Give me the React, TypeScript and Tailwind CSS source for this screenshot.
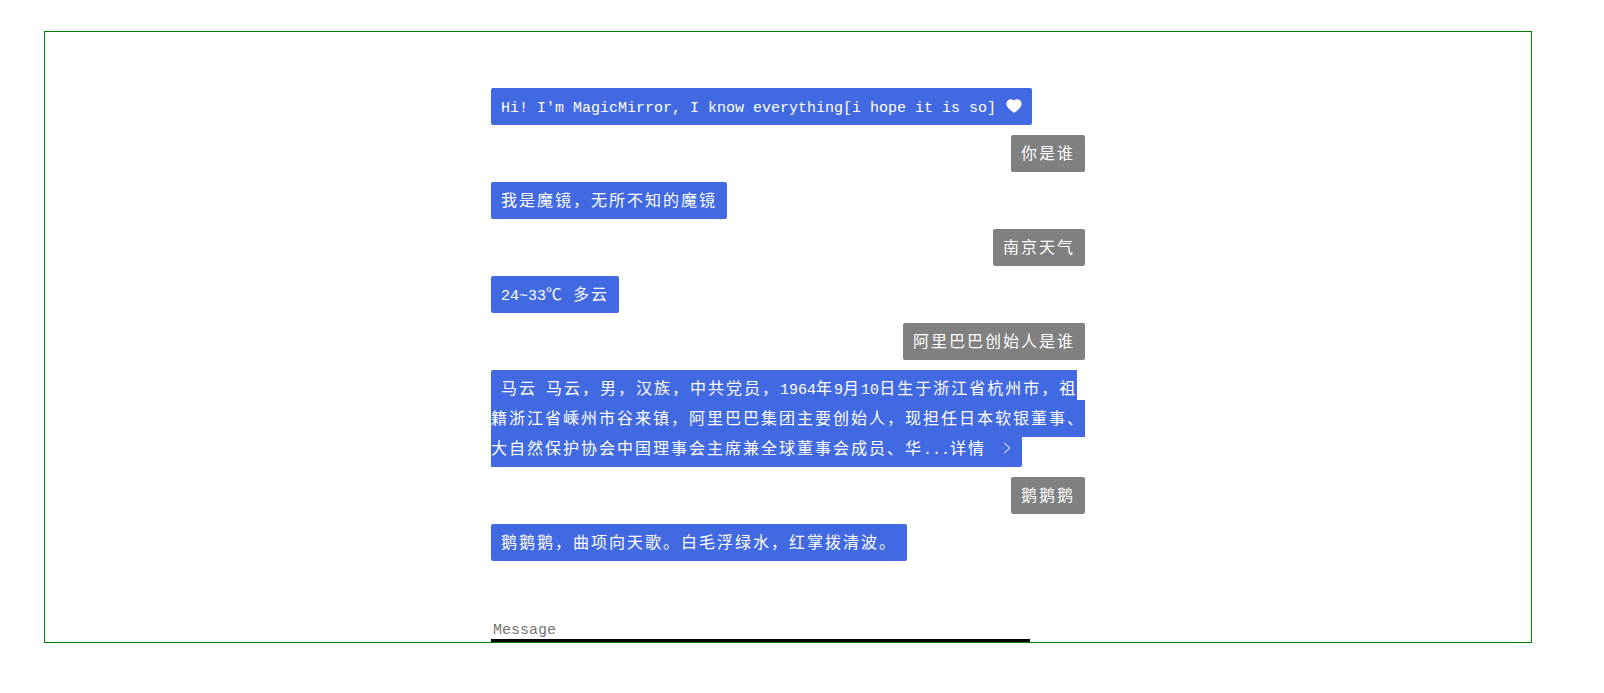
import type { ReactNode } from "react";
import { AiFillHeart } from "react-icons/ai";

// latin runs are narrower than the CJK ones: 9px per char vs 18px
function L({ children }: { children: ReactNode }) {
    return <span className="text-[15px] leading-none tracking-normal whitespace-pre">{children}</span>;
}

function Bot({ children }: { children: ReactNode }) {
    return (
        <div className="pt-[9px] pb-[8px]">
            <span className="rounded-[2px] bg-[#4169e1] px-[10px] pt-[10.5px] pb-[8.5px] text-white">{children}</span>
        </div>
    );
}

function Me({ children }: { children: ReactNode }) {
    return (
        <div className="pt-[9px] pb-[8px] text-right">
            <span className="rounded-[2px] bg-[#808080] px-[10px] pt-[10.5px] pb-[8.5px] text-white">{children}</span>
        </div>
    );
}

export default function App() {
    return (
        <div className="pt-[31px] bg-white">
            <div className="ml-[44px] flex h-[612px] w-[1488px] flex-col overflow-hidden border border-[#008000]">
                <div className="mx-auto flex h-full w-[594px] flex-col pt-[51px] font-['Liberation_Mono','Noto_Sans_CJK_SC',monospace] text-[16px] leading-[30px] tracking-[2px]">
                    <Bot>
                        <L>Hi! I'm MagicMirror, I know everything[i hope it is so] </L>
                        <AiFillHeart className="-mr-[1px] inline-block h-[18px] w-[18px] align-[-4px] leading-none" />
                    </Bot>
                    <Me>你是谁</Me>
                    <Bot>我是魔镜，无所不知的魔镜</Bot>
                    <Me>南京天气</Me>
                    <Bot>
                        <L>24~33</L>℃<L> </L>多云
                    </Bot>
                    <Me>阿里巴巴创始人是谁</Me>
                    <Bot>
                        马云<L> </L>马云，男，汉族，中共党员，<L>1964</L>年<L>9</L>月<L>10</L>日生于浙江省杭州市，祖籍浙江省嵊州市谷来镇，阿里巴巴集团主要创始人，现担任日本软银董事、大自然保护协会中国理事会主席兼全球董事会成员、华<L>...</L>详情
                        <svg viewBox="0 0 26 14" className="inline-block h-[14px] w-[26px] align-[-2px]" fill="none" stroke="currentColor" strokeWidth="1">
                            <path d="M18 2l6 5-6 5" />
                        </svg>
                    </Bot>
                    <Me>鹅鹅鹅</Me>
                    <Bot>鹅鹅鹅，曲项向天歌。白毛浮绿水，红掌拨清波。</Bot>
                    <input
                        placeholder="Message"
                        className="mt-auto block h-[30px] w-[539px] shrink-0 border-b-[3px] border-black px-[2px] pt-[10px] text-[15px] tracking-normal outline-none placeholder:text-[#757575]"
                    />
                </div>
            </div>
        </div>
    );
}
